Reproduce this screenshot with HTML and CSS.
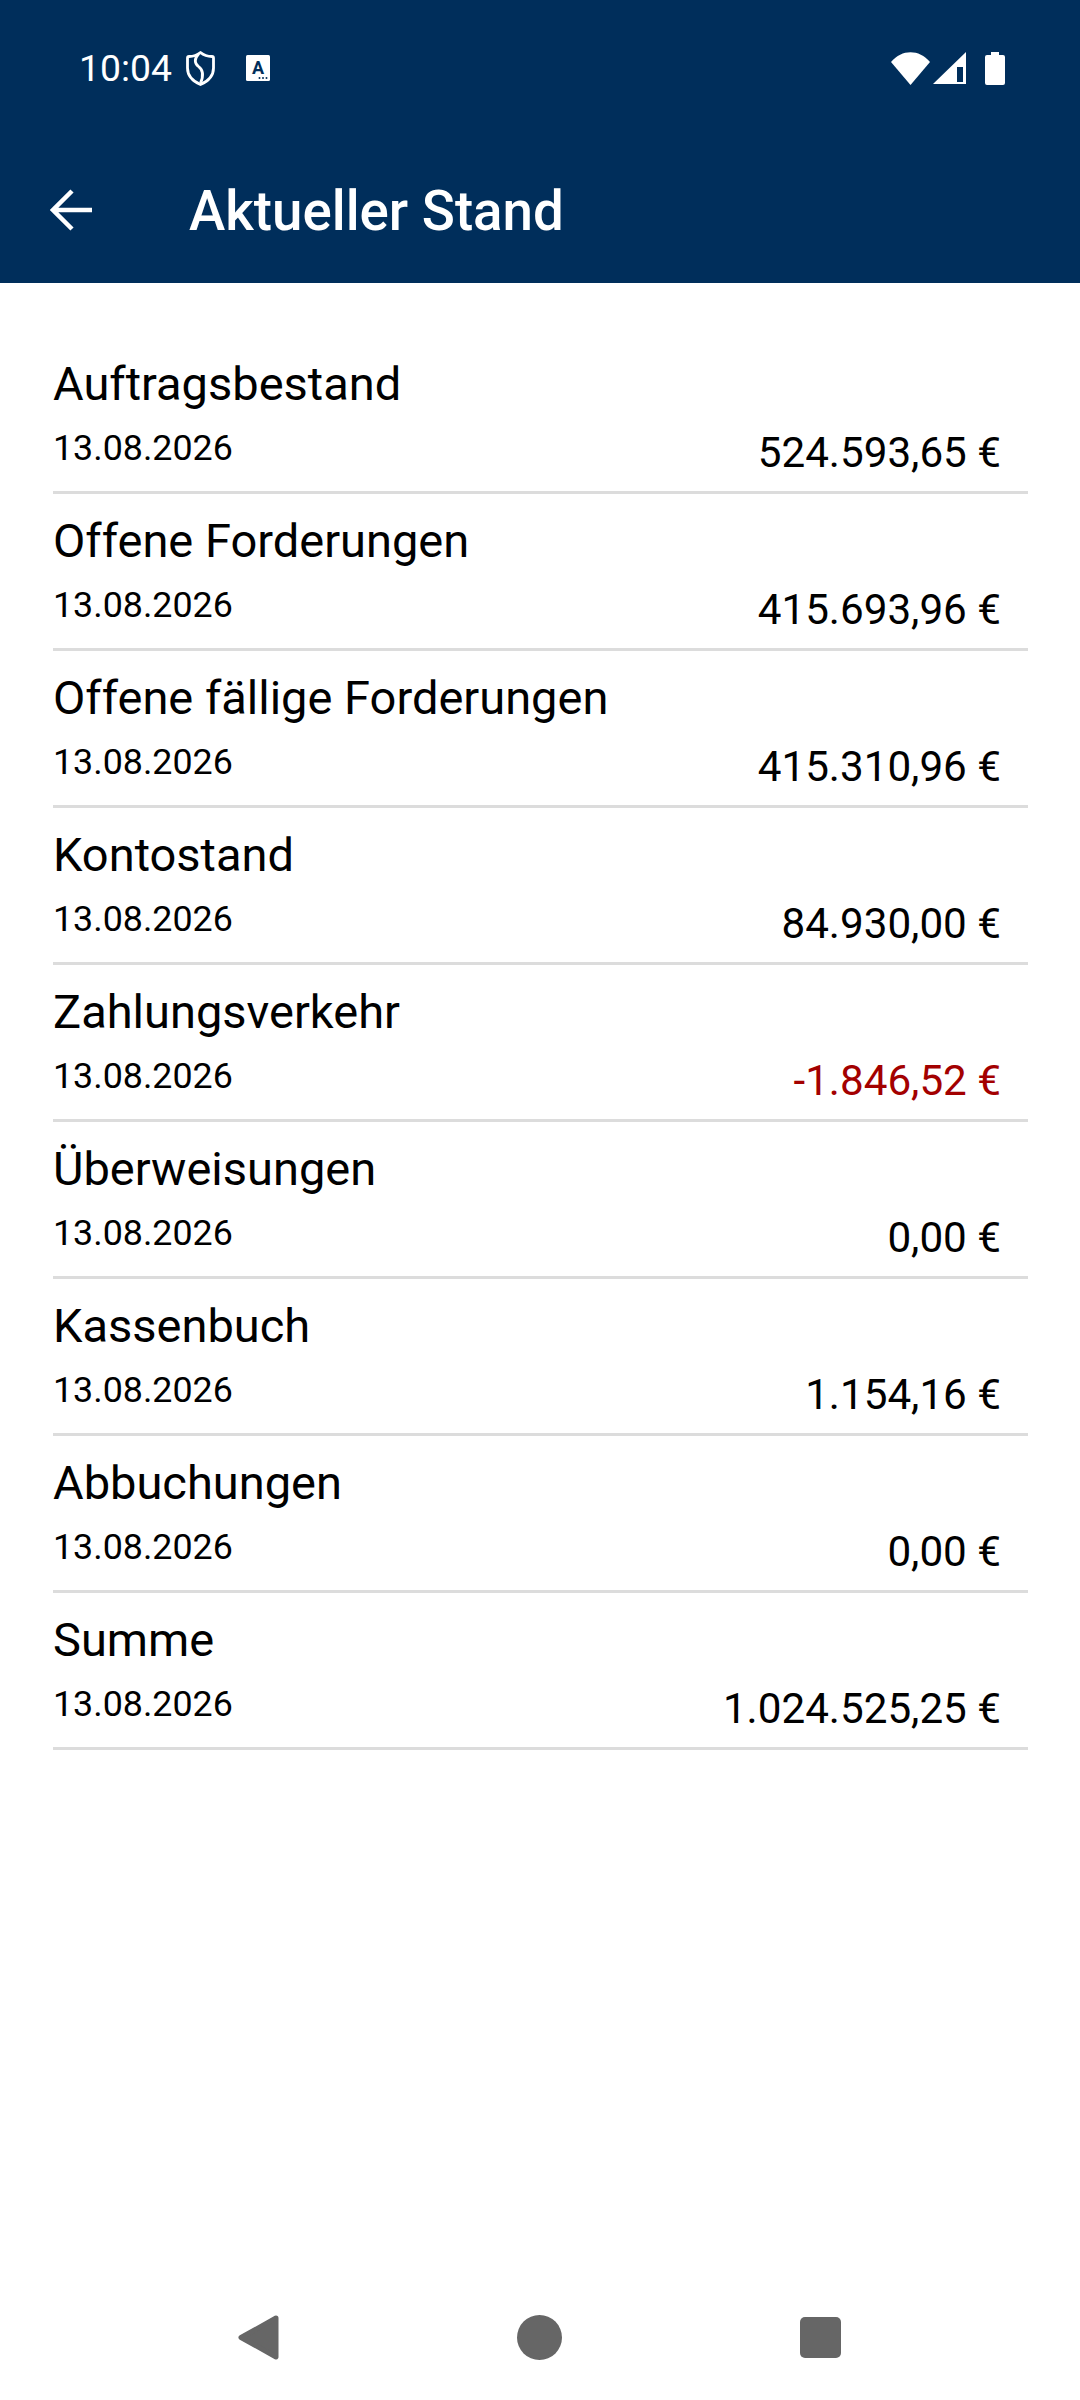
FILE: index.html
```html
<!DOCTYPE html>
<html lang="de">
<head>
    <meta charset="UTF-8">
    <meta name="viewport" content="width=device-width, initial-scale=1.0">
    <title>Aktueller Stand</title>
    <link rel="stylesheet" href="styles.css">
</head>
<body>
    <div class="screen">
        <header class="app_header">
            <div class="status_bar">
                <span class="clock">10:04</span>
                <svg class="shield_icon" viewBox="0 0 29 35" width="29" height="35">
                    <path d="M14.5 1.500 C17.500 4 22 5.500 26 5.500 C27 5.500 27.500 6 27.500 7 V17 C27.500 25 21.500 30.500 14.500 33.500 C7.500 30.500 1.500 25 1.500 17 V7 C1.500 6 2 5.500 3 5.500 C7 5.500 11.500 4 14.5 1.500 Z" fill="none" stroke="#fff" stroke-width="2.800" stroke-linejoin="round"/>
                    <path d="M12.500 3 C8 8 8.500 12.500 12.500 15.500 C16.500 18.500 18.500 23 14.500 32" fill="none" stroke="#fff" stroke-width="2.800"/>
                </svg>
                <svg class="a_icon" viewBox="0 0 24 26" width="24" height="26">
                    <rect width="24" height="26" rx="1.500" fill="#fff"/>
                    <text x="12" y="19" text-anchor="middle" class="a_icon_letter">A</text>
                    <circle cx="13.500" cy="23" r="1" fill="#002e5b"/>
                    <circle cx="17" cy="23" r="1" fill="#002e5b"/>
                    <circle cx="20.500" cy="23" r="1" fill="#002e5b"/>
                </svg>
                <div class="status_right">
                    <svg viewBox="0 0 39 33" width="39" height="33">
                        <path d="M0 10 C11 -3 28 -3 39 10 L19.500 33 Z" fill="#fff"/>
                    </svg>
                    <svg class="signal_icon" viewBox="0 0 33 32" width="33" height="32">
                        <path fill-rule="evenodd" d="M33 0 V32 H0 Z M24 15 V30 H30 V15 Z" fill="#fff"/>
                    </svg>
                    <svg class="battery_icon" viewBox="0 0 20 33" width="20" height="33">
                        <path d="M6 0 H14 V3 H18 A2 2 0 0 1 20 5 V31 A2 2 0 0 1 18 33 H2 A2 2 0 0 1 0 31 V5 A2 2 0 0 1 2 3 H6 Z" fill="#fff"/>
                    </svg>
                </div>
            </div>
            <div class="toolbar">
                <svg class="back_icon" viewBox="0 0 42 42" width="42" height="42">
                    <path d="M42 21 H3 M22 2 L3 21 L22 40" fill="none" stroke="#fff" stroke-width="4.500"/>
                </svg>
                <h1>Aktueller Stand</h1>
            </div>
        </header>

        <main class="balance_list">
            <div class="balance_row">
                <div class="row_name">Auftragsbestand</div>
                <div class="row_details"><span class="row_date">13.08.2026</span><span class="row_amount">524.593,65 €</span></div>
            </div>
            <div class="balance_row">
                <div class="row_name">Offene Forderungen</div>
                <div class="row_details"><span class="row_date">13.08.2026</span><span class="row_amount">415.693,96 €</span></div>
            </div>
            <div class="balance_row">
                <div class="row_name">Offene fällige Forderungen</div>
                <div class="row_details"><span class="row_date">13.08.2026</span><span class="row_amount">415.310,96 €</span></div>
            </div>
            <div class="balance_row">
                <div class="row_name">Kontostand</div>
                <div class="row_details"><span class="row_date">13.08.2026</span><span class="row_amount">84.930,00 €</span></div>
            </div>
            <div class="balance_row">
                <div class="row_name">Zahlungsverkehr</div>
                <div class="row_details"><span class="row_date">13.08.2026</span><span class="row_amount negative">-1.846,52 €</span></div>
            </div>
            <div class="balance_row">
                <div class="row_name">Überweisungen</div>
                <div class="row_details"><span class="row_date">13.08.2026</span><span class="row_amount">0,00 €</span></div>
            </div>
            <div class="balance_row">
                <div class="row_name">Kassenbuch</div>
                <div class="row_details"><span class="row_date">13.08.2026</span><span class="row_amount">1.154,16 €</span></div>
            </div>
            <div class="balance_row">
                <div class="row_name">Abbuchungen</div>
                <div class="row_details"><span class="row_date">13.08.2026</span><span class="row_amount">0,00 €</span></div>
            </div>
            <div class="balance_row">
                <div class="row_name">Summe</div>
                <div class="row_details"><span class="row_date">13.08.2026</span><span class="row_amount">1.024.525,25 €</span></div>
            </div>
        </main>

        <nav class="nav_bar">
            <svg viewBox="0 0 41 45" width="41" height="45">
                <path d="M38 3 L3 22.500 L38 42 Z" fill="#666" stroke="#666" stroke-width="5" stroke-linejoin="round"/>
            </svg>
            <svg viewBox="0 0 45 45" width="45" height="45">
                <circle cx="22.500" cy="22.500" r="22.500" fill="#666"/>
            </svg>
            <svg viewBox="0 0 41 41" width="41" height="41">
                <rect width="41" height="41" rx="5" fill="#666"/>
            </svg>
        </nav>
    </div>
</body>
</html>
```

FILE: styles.css
```css
* {
    box-sizing: border-box;
}

body {
    margin: 0;
    background-color: white;
    font-family: Roboto, "Liberation Sans", sans-serif;
    color: black;
}

svg {
    display: block;
}

.screen {
    display: flex;
    flex-direction: column;
    width: 1080px;
    height: 2400px;
}

.app_header {
    height: 283px;
    background-color: #002e5b;
    color: white;
}

.status_bar {
    display: flex;
    align-items: center;
    height: 136px;
    padding: 0 75px 0 79px;
}

.clock {
    font-size: 37.3px;
    margin-right: 14px;
    white-space: nowrap;
}

.a_icon {
    margin-left: 31px;
}

.a_icon_letter {
    font-size: 18px;
    font-weight: 700;
    fill: #002e5b;
}

.status_right {
    display: flex;
    align-items: flex-start;
    margin-left: auto;
}

.signal_icon {
    margin-left: 3px;
}

.battery_icon {
    margin-left: 19px;
}

.toolbar {
    display: flex;
    align-items: center;
    height: 147px;
    padding: 0 0 0 50px;
}

.toolbar h1 {
    margin: 2px 0 0 97px;
    font-size: 54.7px;
    font-weight: 500;
}

.balance_list {
    flex: 1;
    padding: 54px 52px 0 53px;
}

.balance_row {
    height: 157px;
    border-bottom: 3px solid #dcdcdc;
    padding-top: 16px;
}

.row_name {
    font-size: 47px;
    line-height: 62px;
    margin-bottom: 8px;
}

.row_details {
    display: flex;
    justify-content: space-between;
    padding-right: 27px;
}

.row_date {
    font-size: 35.8px;
    line-height: 50px;
}

.row_amount {
    font-size: 42.2px;
    line-height: 56px;
    margin-top: 2px;
}

.negative {
    color: #a30000;
}

.nav_bar {
    display: flex;
    justify-content: space-between;
    align-items: center;
    height: 45px;
    margin-bottom: 40px;
    padding: 0 239px 0 238px;
}
```
